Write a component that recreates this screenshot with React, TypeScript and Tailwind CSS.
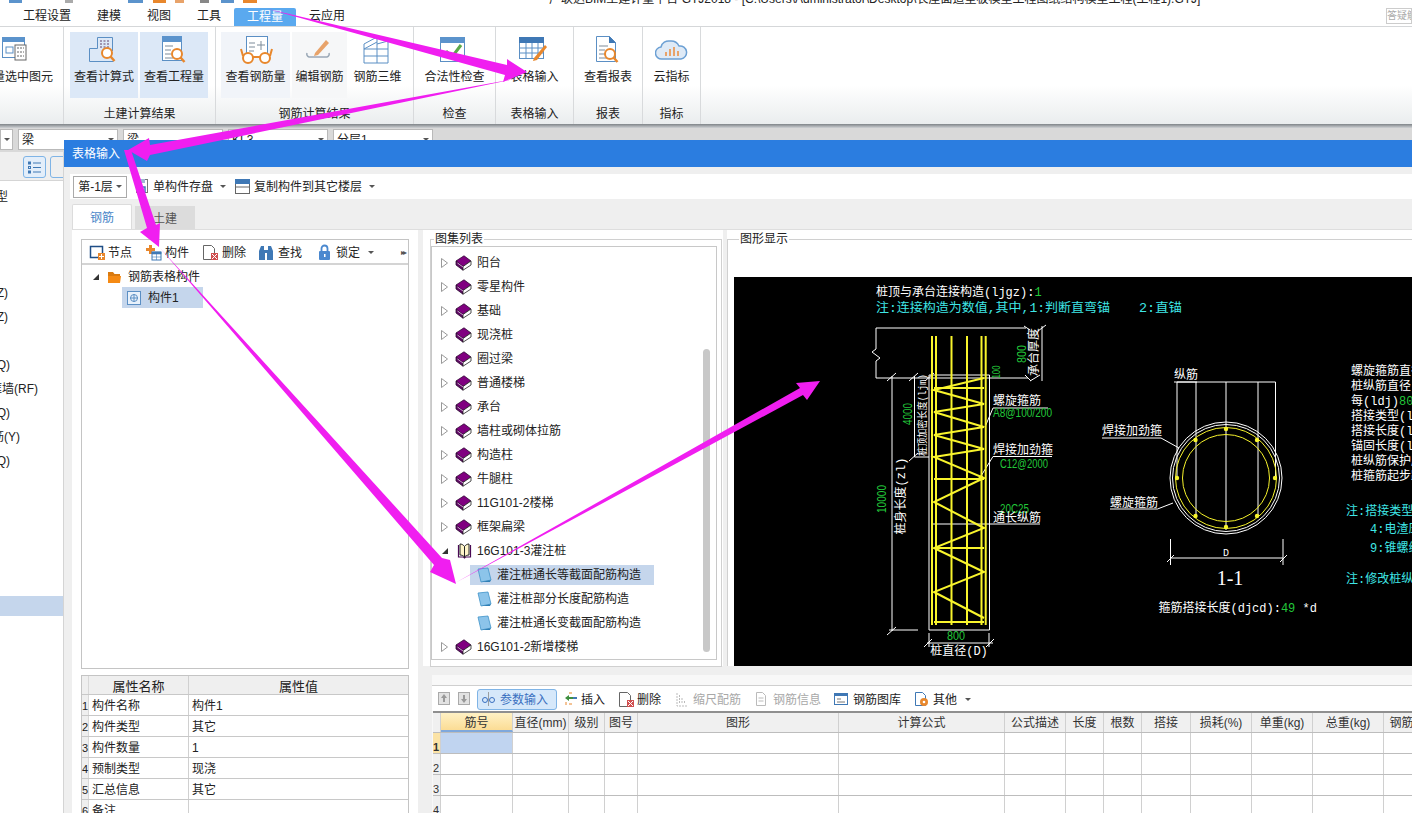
import React from "react";

const FONT = "font-['Liberation_Sans','Noto_Sans_CJK_SC',sans-serif]";

const Mag = ({ x, y, r = 5 }: { x: number; y: number; r?: number }) => (
  <g fill="none" stroke="#e8872c" strokeWidth="2">
    <circle cx={x} cy={y} r={r} fill="#fff" />
    <path d={`M${x + r * 0.7} ${y + r * 0.7}l${r * 0.8} ${r * 0.9}`} strokeWidth="2.5" />
  </g>
);

const Doc = () => (
  <>
    <rect x="5.5" y="1.5" width="19" height="24" fill="#fff" stroke="#5b8fc4" />
    <rect x="5" y="1" width="20" height="6" fill="#5b93cc" />
    <path d="M8 11h8M8 15h6M8 19h6M8 23h8" stroke="#7d8b99" />
  </>
);

const RibbonIcon = ({ kind }: { kind: string }) => {
  const b = "#5b8fc4";
  let c: React.ReactNode = null;
  if (kind === "select")
    c = (
      <>
        <rect x="2.5" y="2.5" width="22" height="20" fill="#fff" stroke={b} />
        <rect x="2" y="2" width="23" height="5" fill="#5b93cc" />
        <rect x="6" y="12" width="7" height="6" fill="none" stroke={b} />
        <rect x="15" y="10" width="11" height="15" fill="#fff" stroke="#666" />
        <path d="M17 13h7M17 17h7M17 21h7" stroke="#666" strokeDasharray="2 1" />
      </>
    );
  if (kind === "formula")
    c = (
      <>
        <path d="M2.5 26.5h24M2.5 26.5V13.5H10.5V2.5H25.5V16" fill="none" stroke={b} />
        <path d="M13 6h10M13 9h10M13 12h10" stroke="#8a7a9a" strokeDasharray="2 1.5" strokeWidth="1.5" />
        <Mag x={20} y={18} />
      </>
    );
  if (kind === "quantity")
    c = (
      <>
        <Doc />
        <Mag x={20} y={19} />
      </>
    );
  if (kind === "glasses")
    c = (
      <>
        <rect x="7.5" y="1.5" width="21" height="20" fill="#fff" stroke={b} />
        <path d="M10 8h6M10 12h6M10 16h5M22 6v9M18 10h8" stroke="#7d8b99" />
        <g fill="#fff" stroke="#e8872c" strokeWidth="2">
          <circle cx="9" cy="23" r="5" />
          <circle cx="26" cy="23" r="5" />
          <path d="M14 22h7M4 21L2 14M31 21l2-7" fill="none" />
        </g>
      </>
    );
  if (kind === "edit")
    c = (
      <>
        <path d="M4 18a3 3 0 0 0 2 4h18a3 3 0 0 0 2-4" fill="none" stroke="#9aa8b6" strokeWidth="1.5" />
        <path d="M12 18L23 5l3 3L15 20l-4 1z" fill="#e8a36a" />
      </>
    );
  if (kind === "rebar3d")
    c = (
      <>
        <g fill="none" stroke={b}>
          <path d="M3 9L16 2l11 4v22M3 9v19M16 2v26M3 14h24M3 21h24M3 28h24M3 14L16 7M27 6L16 9" />
        </g>
      </>
    );
  if (kind === "check")
    c = (
      <>
        <rect x="2.5" y="2.5" width="24" height="24" fill="#fff" stroke={b} />
        <rect x="2" y="2" width="25" height="6" fill="#5b93cc" />
        <path d="M8 16l6 6 9-12" fill="none" stroke="#5ba84a" strokeWidth="3" />
      </>
    );
  if (kind === "table")
    c = (
      <>
        <rect x="1.5" y="2.5" width="24" height="21" fill="#fff" stroke={b} />
        <rect x="1" y="2" width="25" height="6" fill="#3f78b5" />
        <path d="M2 13h23M2 18h23M8 8v15M14 8v15M20 8v15" stroke={b} />
        <path d="M16 23l11-13 2 2-10 13-4 1z" fill="#e8872c" />
      </>
    );
  if (kind === "report")
    c = (
      <>
        <path d="M5.5 1.5h13l6 6v19h-19z" fill="#fff" stroke={b} />
        <path d="M18 1v7h7z" fill="#3f78b5" />
        <path d="M8 11h9M8 15h6M8 19h6M8 23h9" stroke="#7d8b99" />
        <Mag x={19} y={19} />
      </>
    );
  if (kind === "cloud")
    c = (
      <>
        <path d="M7 24a6 6 0 0 1-1-12 8 8 0 0 1 9-6 9 9 0 0 1 9 5 6.500 6.500 0 0 1 2 13z" fill="#dfeaf6" stroke="#6ca0d4" strokeWidth="1.5" />
        <path d="M11 21v-4M15 21v-7M19 21v-9M23 21v-5" stroke="#e8a36a" strokeWidth="2" />
      </>
    );
  return (
    <svg width="34" height="30" viewBox="0 0 34 30" className="block">
      {c}
    </svg>
  );
};

const RBtn = ({ icon, text, cls = "" }: { icon: string; text: string; cls?: string }) => (
  <div className={`flex flex-col items-center h-[66px] pt-[3px] shrink-0 ${cls}`}>
    <div className="h-[30px]">
      <RibbonIcon kind={icon} />
    </div>
    <span className="mt-[3px] text-[12px] leading-[18px] whitespace-nowrap">{text}</span>
  </div>
);

const Group = ({ w, label, children, pad }: { w: string; label: string; children: React.ReactNode; pad: string }) => (
  <div className={`flex flex-col h-full border-r border-[#d8dadc] shrink-0 overflow-hidden ${w}`}>
    <div className={`flex h-[66px] mt-[5px] ${pad}`}>{children}</div>
    <div className="text-center text-[12px] leading-[16px] mt-[8px]">{label}</div>
  </div>
);

const Caret = () => <span className="inline-block w-0 h-0 border-x-[3px] border-x-transparent border-t-[3px] border-t-[#555]" />;

const Book = () => (
  <svg width="17" height="16" viewBox="0 0 17 16" className="block shrink-0">
    <path d="M1 6L9 .8l7 5.200-8 5.500z" fill="#800080" stroke="#2e0a33" strokeWidth=".8" />
    <path d="M1 6v4l7 5.200v-3.700z" fill="#5e0a63" stroke="#2e0a33" strokeWidth=".8" />
    <path d="M8 11.500v3.700l8-5.200V6z" fill="#fff" stroke="#222" strokeWidth=".8" />
    <path d="M2.500 8L8 12" stroke="#f0c8f2" strokeWidth=".8" />
  </svg>
);

const OpenBook = () => (
  <svg width="17" height="16" viewBox="0 0 17 16" className="block shrink-0">
    <path d="M2.500 2v12h5l1 1 1-1h5V2" fill="none" stroke="#4a0a55" strokeWidth="1.200" />
    <path d="M8.500 3.500C7 1.500 5.500 1 4 1v11c1.500 0 3 .5 4.500 2 1.500-1.500 3-2 4.500-2V1c-1.500 0-3 .5-4.500 2.500z" fill="#fff6c9" stroke="#222" />
    <path d="M8.500 3.500V14" stroke="#222" />
  </svg>
);

const Page = () => (
  <svg width="15" height="16" viewBox="0 0 15 16" className="block shrink-0">
    <path d="M1 2l10-1 3 12-10 2z" fill="#8cc4ea" stroke="#3f93c9" strokeWidth=".8" />
    <path d="M4 15l10-2-1 2H5z" fill="#2f7fb5" />
  </svg>
);

const Expander = ({ open }: { open?: boolean }) =>
  open ? (
    <span className="ml-[1px] mr-[7px] w-0 h-0 border-l-[6px] border-l-transparent border-b-[6px] border-b-[#333]" />
  ) : (
    <svg width="7" height="10" viewBox="0 0 7 10" className="block shrink-0">
      <path d="M.5.500l6 4.500-6 4.500z" fill="#fff" stroke="#999" />
    </svg>
  );

const TB = ({ kind }: { kind: string }) => {
  const b = "#3f78b5";
  const o = "#e8872c";
  const map: Record<string, React.ReactNode> = {
    node: (
      <>
        <rect x="1.500" y="2.500" width="12" height="11" fill="#fff" stroke="#1f4e86" strokeWidth="1.5" />
        <rect x="9" y="9" width="7" height="7" fill={o} />
        <path d="M12.500 10v5M10 12.500h5" stroke="#fff" />
      </>
    ),
    comp: (
      <>
        <path d="M4 1h3v3h3v3H7v3H4V7H1V4h3z" fill={o} />
        <rect x="7" y="8" width="9" height="8" fill="#fff" stroke={b} />
        <path d="M7 8h9v2H7zM7 13h9M11.500 10v6" fill={b} stroke={b} strokeWidth=".6" />
      </>
    ),
    del: (
      <>
        <path d="M1.500 1.500h8l3 3v11h-11z" fill="#fff" stroke="#666" />
        <rect x="9" y="9" width="7" height="7" fill="#d04f4f" />
        <path d="M10 10l5 5M15 10l-5 5" stroke="#fff" />
      </>
    ),
    find: (
      <>
        <path d="M1 7l2-5h3v4h4V2h3l2 5v9h-6V9H7v7H1z" fill={b} />
      </>
    ),
    lock: (
      <>
        <rect x="2" y="7" width="11" height="9" rx="1" fill="#4a88cf" />
        <path d="M4.500 7V4.500a3 3 0 0 1 6 0V7" fill="none" stroke="#4a88cf" strokeWidth="1.8" />
        <rect x="7" y="10" width="1.500" height="3" fill="#fff" />
      </>
    ),
    save: (
      <>
        <rect x="2.500" y="1.500" width="11" height="13" fill="#fff" stroke="#777" />
        <rect x="5" y="9" width="6" height="5" fill="#fff" stroke={b} strokeWidth="1.500" />
        <rect x="5" y="1" width="6" height="4" fill="#9fb9d5" />
      </>
    ),
    copy: (
      <>
        <rect x="1.500" y="1.500" width="14" height="14" fill="#fff" stroke="#666" />
        <rect x="1" y="1" width="15" height="5" fill="#3f78b5" />
        <path d="M1 9h15" stroke="#666" />
      </>
    ),
    up: (
      <>
        <rect x="1.500" y="1.500" width="11" height="12" fill="#e2e2e2" stroke="#aaa" />
        <path d="M7 3l3 4H8v4H6V7H4z" fill="#999" />
      </>
    ),
    down: (
      <>
        <rect x="1.500" y="1.500" width="11" height="12" fill="#e2e2e2" stroke="#aaa" />
        <path d="M7 12l3-4H8V4H6v4H4z" fill="#999" />
      </>
    ),
    param: (
      <>
        <path d="M7.500 1v14" stroke="#8a8a8a" strokeWidth=".8" />
        <circle cx="4" cy="9" r="2.500" fill="none" stroke="#3a70c0" />
        <circle cx="11" cy="9" r="2.500" fill="none" stroke="#3a70c0" />
      </>
    ),
    insert: (
      <>
        <path d="M2 7l4-3v2h4v2H6v2z" fill="#3f8f3f" />
        <path d="M6 2h3M6 13h3M3 11v3" stroke={o} />
        <rect x="10" y="6" width="4" height="2" fill={b} />
      </>
    ),
    scale: (
      <>
        <path d="M2 2v13h10M4.500 4v9M7 7v6M9.500 10v3" stroke="#bbb" fill="none" strokeDasharray="2 1" />
      </>
    ),
    info: (
      <>
        <path d="M2.500 1.500h6l3 3v10h-9z" fill="#fff" stroke="#bbb" />
        <path d="M4.500 7h5M4.500 10h5" stroke="#bbb" />
      </>
    ),
    lib: (
      <>
        <rect x="1.500" y="2.500" width="13" height="11" fill="#fff" stroke={b} />
        <rect x="1" y="2" width="14" height="3" fill="#3f78b5" />
        <path d="M4 8h4M4 11h8" stroke="#777" />
      </>
    ),
    other: (
      <>
        <path d="M1.500 1.500h7l3 3v10h-10z" fill="#fff" stroke={b} />
        <circle cx="10" cy="11" r="4" fill={o} />
        <circle cx="10" cy="11" r="1.300" fill="#fff" />
      </>
    ),
  };
  return (
    <svg width="17" height="17" viewBox="0 0 17 17" className="block shrink-0">
      {map[kind]}
    </svg>
  );
};

const ToolItem = ({ icon, text, cls = "", textCls = "" }: { icon: string; text: string; cls?: string; textCls?: string }) => (
  <div className={`flex items-center shrink-0 ${cls}`}>
    <TB kind={icon} />
    <span className={`text-[12px] whitespace-nowrap ${textCls}`}>{text}</span>
  </div>
);

const sideRows = [
  { t: "类型", c: "w-[8px]" },
  { t: "", c: "w-[8px]" },
  { t: "", c: "w-[8px]" },
  { t: "", c: "w-[8px]" },
  { t: "构造柱(Z)", c: "w-[8px]" },
  { t: "构造柱(Z)", c: "w-[8px]" },
  { t: "", c: "w-[8px]" },
  { t: "剪力墙(Q)", c: "w-[10px]" },
  { t: "人防门框墙(RF)", c: "w-[38px]" },
  { t: "砌体墙(Q)", c: "w-[10px]" },
  { t: "砌体加筋(Y)", c: "w-[20px]" },
  { t: "保温墙(Q)", c: "w-[10px]" },
  { t: "", c: "w-[8px]" },
  { t: "", c: "w-[8px]" },
  { t: "", c: "w-[8px]" },
  { t: "", c: "w-[8px]" },
  { t: "", c: "w-[8px]" },
];

const atlas = ["阳台", "零星构件", "基础", "现浇桩", "圈过梁", "普通楼梯", "承台", "墙柱或砌体拉筋", "构造柱", "牛腿柱", "11G101-2楼梯", "框架扁梁"];
const children = ["灌注桩通长等截面配筋构造", "灌注桩部分长度配筋构造", "灌注桩通长变截面配筋构造"];

const props = [
  ["1", "构件名称", "构件1"],
  ["2", "构件类型", "其它"],
  ["3", "构件数量", "1"],
  ["4", "预制类型", "现浇"],
  ["5", "汇总信息", "其它"],
  ["6", "备注", ""],
];

const cols = [
  { t: "筋号", c: "w-[72px] bg-gradient-to-b from-[#fff1c4] to-[#fbdc94] border-b-2 border-b-[#7fa8dc]" },
  { t: "直径(mm)", c: "w-[56px]" },
  { t: "级别", c: "w-[36px]" },
  { t: "图号", c: "w-[33px]" },
  { t: "图形", c: "w-[201px]" },
  { t: "计算公式", c: "w-[166px]" },
  { t: "公式描述", c: "w-[61px]" },
  { t: "长度", c: "w-[38px]" },
  { t: "根数", c: "w-[38px]" },
  { t: "搭接", c: "w-[49px]" },
  { t: "损耗(%)", c: "w-[61px]" },
  { t: "单重(kg)", c: "w-[61px]" },
  { t: "总重(kg)", c: "w-[71px]" },
  { t: "钢筋归类", c: "w-[60px]" },
];

const bodyCols = ["w-[72px]", "w-[56px]", "w-[36px]", "w-[33px]", "w-[201px]", "w-[166px]", "w-[61px]", "w-[38px]", "w-[38px]", "w-[49px]", "w-[61px]", "w-[61px]", "w-[71px]", "w-[60px]"];

const Y = "#f8f42c";
const W = "#ffffff";
const G = "#22c83a";
const C = "#3fe6e6";
const CJK = "'Liberation Mono','Noto Sans CJK SC',monospace";
const SANS = "'Liberation Sans',sans-serif";

const T = ({ x, y, f = W, s = 12, a, r, children: ch, len, sans }: { x: number; y: number; f?: string; s?: number; a?: "middle"; r?: boolean; children: React.ReactNode; len?: number; sans?: boolean }) => (
  <text
    x={x}
    y={y + 1}
    fill={f}
    fontSize={s}
    fontFamily={sans ? SANS : CJK}
    textAnchor={a}
    dominantBaseline="middle"
    textLength={len}
    lengthAdjust={len ? "spacingAndGlyphs" : undefined}
    transform={r ? `rotate(-90 ${x} ${y + 1})` : undefined}
  >
    {ch}
  </text>
);

const zig: [number, number][] = [
  [984, 378], [934, 390], [984, 404], [934, 412], [984, 427], [934, 435], [984, 449], [934, 457], [984, 478], [934, 502], [984, 528], [934, 548], [984, 572], [934, 592], [984, 618],
];

const Drawing = () => (
  <svg viewBox="734 277 678 389" className="block w-[678px] h-[389px]">
    <rect x="734" y="277" width="678" height="389" fill="#000" />
    <T x={876} y={292}>桩顶与承台连接构造(ljgz):<tspan fill={G}>1</tspan></T>
    <T x={876} y={308} f={C} len={234}>注:连接构造为数值,其中,1:判断直弯锚</T>
    <T x={1139} y={308} f={C} len={43}>2:直锚</T>

    <g stroke={W} fill="none" strokeWidth="1">
      <path d="M876 328H1026M876 328v21l-4 3 8 6-4 3v17M876 378H1028M1042 326v55" />
      <path d="M1024 326l6 4M1025 375l6 6M1038 331l8-6M1030 381l10-6" />
      <path d="M929 375V630H989.500V375H929" />
      <path d="M892 376V631M889 630H918M887 635l9-8M887 381l9-8M914.500 376V457M914.500 457H929M909 461l9-8M909 381l9-8M925 381l9-8" />
      <path d="M993 408H1048M993 408L985 427M993 456.500H1052M993 456.500L981 476M932 524H1040" />
      <path d="M927 643H993M929 633v14M989 633v14M924 647l8-8M986 647l8-8" />
      <path d="M1177 382H1275.500M1177 382V478M1196 382V516M1226 382V530M1258 382V516M1275.500 382V478" />
      <path d="M1174 382H1197M1102 438H1161L1179 448M1110 509H1157.500L1173 503" />
      <path d="M1170.500 558H1283M1170.500 539V565M1283 539V565M1167 562l7-7M1280 562l7-7" />
      <circle cx="1226" cy="478" r="56" />
      <circle cx="1226" cy="478" r="53.500" />
    </g>
    <g stroke={Y} fill="none">
      <circle cx="1226" cy="478" r="50.500" />
      <circle cx="1226" cy="478" r="43.500" />
    </g>
    <g fill={Y}>
      {[[1226, 429], [1226, 527], [1177, 478], [1275, 478], [1195.500, 440], [1257, 440], [1195.500, 516], [1257, 516]].map(([x, y]) => (
        <circle key={`${x}-${y}`} cx={x} cy={y} r="2.200" />
      ))}
    </g>

    <g stroke={Y} fill="none" strokeWidth="2">
      <path d="M932 336V625M936 336V625M951.500 336V625M967 336V625M981.500 336V625M985.700 336V625" />
      <path d={"M" + zig.map((p) => p.join(" ")).join("L")} />
      <path d="M934 479H984M934 548H984M934 622H984M934 388H984" />
    </g>
    <g fill={Y}>
      <circle cx="981" cy="478" r="2.500" />
    </g>

    <T x={883} y={498} f={G} a="middle" r sans len={28}>10000</T>
    <T x={902} y={495} a="middle" r>桩身长度(zl)</T>
    <T x={909} y={413} f={G} a="middle" r sans len={22}>4000</T>
    <T x={923} y={414} s={10} a="middle" r len={82}>桩顶加密长度(ljm)</T>
    <T x={997} y={371} f={G} s={11} a="middle" r sans len={13}>100</T>
    <T x={1023} y={353} f={G} a="middle" r sans len={18}>800</T>
    <T x={1035} y={351} s={12} a="middle" r>承台厚度</T>

    <T x={993} y={401}>螺旋箍筋</T>
    <T x={993} y={413} f={G} sans len={59}>A8@100/200</T>
    <T x={993} y={450}>焊接加劲箍</T>
    <T x={1000} y={464} f={G} sans len={48}>C12@2000</T>
    <T x={1000} y={509} f={G} sans len={29}>20C25</T>
    <T x={993} y={518}>通长纵筋</T>
    <T x={956} y={636} f={G} a="middle" sans len={18}>800</T>
    <T x={959} y={651} a="middle">桩直径(D)</T>

    <T x={1174} y={375}>纵筋</T>
    <T x={1102} y={431}>焊接加劲箍</T>
    <T x={1110} y={503}>螺旋箍筋</T>
    <T x={1226} y={552} s={10} a="middle">D</T>
    <text x="1230" y="580" fill={W} fontSize="20" fontFamily="'Liberation Serif',serif" textAnchor="middle" dominantBaseline="middle">1-1</text>
    <T x={1158.500} y={608}>箍筋搭接长度(djcd):<tspan fill={G}>49</tspan> *d</T>

    <T x={1351} y={371}>螺旋箍筋直径</T>
    <T x={1351} y={386}>桩纵筋直径</T>
    <T x={1351} y={401}>每(ldj)<tspan fill={G}>800</tspan></T>
    <T x={1351} y={416}>搭接类型(l</T>
    <T x={1351} y={431}>搭接长度(l</T>
    <T x={1351} y={446}>锚固长度(l</T>
    <T x={1351} y={461}>桩纵筋保护层</T>
    <T x={1351} y={476}>桩箍筋起步距</T>
    <T x={1346} y={511} f={C}>注:搭接类型</T>
    <T x={1370} y={529} f={C}>4:电渣压力</T>
    <T x={1370} y={548} f={C}>9:锥螺纹</T>
    <T x={1346} y={579} f={C}>注:修改桩纵筋</T>
  </svg>
);

const Arrows = () => (
  <svg viewBox="0 0 1412 813" className="absolute inset-0 w-[1412px] h-[813px] pointer-events-none">
    <g fill="#f01ef0">
      <polygon points="268,9 507,65 507,59 527,72 503,82 505,75" />
      <polygon points="519,78 150,145 149,138 128,150 147,161 150,155" />
      <polygon points="124,150 131,150 156,225 160,223 159,247 140,232 147,228" />
      <polygon points="160,248 442,558 450,560 456,584 430,572 434,565" />
      <polygon points="455,583 800,388 796,383 820,381 807,400 803,395" />
    </g>
  </svg>
);

export default function App() {
  return (
    <div className={`relative w-[1412px] h-[813px] overflow-hidden bg-white text-[#222] ${FONT}`}>
      <div className="flex flex-col h-full">
        {/* title strip */}
        <div className="relative h-[6px] overflow-hidden flex shrink-0">
          <div className="w-[549px] shrink-0 flex -mt-[5px]">
            {[
              { c: "ml-[9px] w-[13px] bg-[#5b93cc]" },
              { c: "ml-[43px] w-[8px] bg-[#aaa]" },
              { c: "ml-[55px] w-[15px] bg-[#5b93cc]" },
              { c: "ml-[10px] w-[13px] bg-[#e8872c]" },
              { c: "ml-[9px] w-[9px] bg-[#e8a36a]" },
              { c: "ml-[16px] w-[9px] bg-[#888]" },
              { c: "ml-[12px] w-[13px] bg-[#5b93cc]" },
              { c: "ml-[9px] w-[14px] bg-[#e8872c]" },
            ].map((d, i) => (
              <span key={i} className={`h-[8px] shrink-0 ${d.c}`} />
            ))}
          </div>
          <div className="-mt-[9px] text-[12px] leading-[16px] whitespace-nowrap">广联达BIM土建计量平台 GTJ2018 - [C:\Users\Administrator\Desktop\长屋面造型板模型工程图纸结构模型工程(工程1).GTJ]</div>
        </div>
        {/* menu */}
        <div className="flex items-end h-[21px] border-b border-[#d5d7d9] shrink-0 text-[12px] relative">
          <span className="ml-[23px] mb-[1px]">工程设置</span>
          <span className="ml-[26px] mb-[1px]">建模</span>
          <span className="ml-[26px] mb-[1px]">视图</span>
          <span className="ml-[26px] mb-[1px]">工具</span>
          <span className="ml-[13px] w-[62px] h-[18px] bg-[#5aa9ef] text-white text-center rounded-t-[2px] leading-[18px]">工程量</span>
          <span className="ml-[13px] mb-[1px]">云应用</span>
          <span className="ml-auto mb-[2px] w-[26px] h-[16px] border border-[#ccc] text-[#aaa] text-[10px] leading-[14px] overflow-hidden whitespace-nowrap">答疑解惑</span>
        </div>
        {/* ribbon */}
        <div className="flex h-[97px] shrink-0 bg-gradient-to-b from-white from-60% to-[#eaedee]">
          <Group w="w-[64px]" label="" pad="justify-end pr-[10px]">
            <RBtn icon="select" text="批量选中图元" />
          </Group>
          <Group w="w-[152px]" label="土建计算结果" pad="pl-[6px] gap-[2px]">
            <RBtn icon="formula" text="查看计算式" cls="w-[68px] bg-[#dce8f7]" />
            <RBtn icon="quantity" text="查看工程量" cls="w-[68px] bg-[#dce8f7]" />
          </Group>
          <Group w="w-[198px]" label="钢筋计算结果" pad="pl-[5px]">
            <RBtn icon="glasses" text="查看钢筋量" cls="w-[69px] bg-[#f1f4f9]" />
            <RBtn icon="edit" text="编辑钢筋" cls="w-[55px] ml-[2px] bg-[#f6f7f8]" />
            <RBtn icon="rebar3d" text="钢筋三维" cls="w-[53px] ml-[4px]" />
          </Group>
          <Group w="w-[82px]" label="检查" pad="justify-center">
            <RBtn icon="check" text="合法性检查" cls="w-[60px]" />
          </Group>
          <Group w="w-[78px]" label="表格输入" pad="justify-center">
            <RBtn icon="table" text="表格输入" cls="w-[49px]" />
          </Group>
          <Group w="w-[69px]" label="报表" pad="justify-center">
            <RBtn icon="report" text="查看报表" cls="w-[48px]" />
          </Group>
          <Group w="w-[58px]" label="指标" pad="justify-center">
            <RBtn icon="cloud" text="云指标" cls="w-[36px]" />
          </Group>
        </div>
        <div className="h-[4px] shrink-0 bg-gradient-to-b from-[#7f8488] to-[#cfd2d5]" />
        {/* selector row */}
        <div className="flex h-[24px] pt-[1px] gap-[5px] bg-[#d9d9d9] shrink-0 pl-[0px] text-[12px]">
          {[
            { t: "", c: "w-[13px]" },
            { t: "梁", c: "w-[100px]" },
            { t: "梁", c: "w-[100px]" },
            { t: "KL3", c: "w-[100px]" },
            { t: "分层1", c: "w-[100px]" },
          ].map((d, i) => (
            <div key={i} className={`h-[21px] bg-white border border-[#b9b9b9] flex items-center justify-between px-[3px] shrink-0 ${d.c}`}>
              <span>{d.t}</span>
              <Caret />
            </div>
          ))}
        </div>
        {/* left sidebar */}
        <div className="flex flex-col w-[64px] flex-1 border-r border-[#d4d4d4] overflow-hidden">
          <div className="h-[29px] bg-[#efefef] border-b border-[#d5d5d5] flex pt-[4px] pl-[23px] gap-[4px] shrink-0">
            <div className="w-[23px] h-[22px] shrink-0 rounded-[3px] border border-[#7fb4e6] bg-[#e3eefa] flex items-center justify-center">
              <svg width="13" height="13" viewBox="0 0 13 13">
                <path d="M5 2h8M5 6.500h8M5 11h8" stroke="#3f78b5" />
                <rect x=".5" y="1" width="2" height="2" fill="none" stroke="#3f78b5" />
                <rect x=".5" y="5.500" width="2" height="2" fill="none" stroke="#3f78b5" />
                <rect x=".5" y="10" width="2" height="2" fill="none" stroke="#3f78b5" />
              </svg>
            </div>
            <div className="w-[23px] h-[22px] shrink-0 rounded-[3px] border border-[#7fb4e6]" />
          </div>
          <div className="pt-[4px] text-[12px]">
            {sideRows.map((r, i) => (
              <div key={i} className="h-[24px] flex items-center">
                <div className={`flex justify-end whitespace-nowrap ${r.c}`}>{r.t}</div>
              </div>
            ))}
            <div className="h-[20px] mt-[3px] bg-[#c5d6ec]" />
          </div>
        </div>
      </div>

      {/* dialog window */}
      <div className="absolute left-[64px] top-[140px] right-0 bottom-0 flex flex-col bg-[#efefef] text-[12px]">
        <div className="h-[27px] bg-[#2b7de0] text-white flex items-center pl-[8px] shrink-0">表格输入</div>
        <div className="h-[25px] mt-[7px] ml-[6px] bg-white flex items-center shrink-0">
          <div className="ml-[3px] w-[54px] h-[22px] border border-[#aaa] flex items-center justify-center gap-[3px]">
            <span>第-1层</span>
            <Caret />
          </div>
          <ToolItem icon="save" text="单构件存盘" cls="ml-[7px] gap-[2px]" />
          <span className="ml-[7px] flex"><Caret /></span>
          <ToolItem icon="copy" text="复制构件到其它楼层" cls="ml-[8px] gap-[3px]" />
          <span className="ml-[7px] flex"><Caret /></span>
        </div>
        <div className="flex items-end h-[30px] pl-[8px] gap-[3px] shrink-0">
          <div className="w-[60px] h-[25px] pt-[2px] bg-white rounded-t-[2px] border border-b-0 border-[#dcdcdc] flex items-center justify-center text-[#4a86c8]">钢筋</div>
          <div className="w-[60px] h-[23px] pt-[2px] bg-[#dcdcdc] flex items-center justify-center text-[#555]">土建</div>
        </div>
        <div className="flex flex-1 ml-[8px] min-h-0 bg-white border-t border-[#dedede]">
          {/* left column */}
          <div className="w-[346px] shrink-0 pl-[9px] pr-[9px] pt-[9px] flex flex-col">
            <div className="h-[430px] border border-[#c4c4c4] shrink-0">
              <div className="h-[25px] pt-[2px] bg-white border-b-2 border-[#d4d4d4] flex items-center relative">
                <ToolItem icon="node" text="节点" cls="ml-[7px] gap-[2px]" />
                <ToolItem icon="comp" text="构件" cls="ml-[13px] gap-[3px]" />
                <ToolItem icon="del" text="删除" cls="ml-[13px] gap-[3px]" />
                <ToolItem icon="find" text="查找" cls="ml-[12px] gap-[3px]" />
                <ToolItem icon="lock" text="锁定" cls="ml-[15px] gap-[2px]" />
                <span className="ml-[8px] flex"><Caret /></span>
                <span className="ml-auto mr-[3px] text-[8px] tracking-[-2px] text-[#555]">▸▸</span>
              </div>
              <div className="h-[20px] flex items-center pl-[10px] mt-[2px]">
                <Expander open />
                <svg width="15" height="13" viewBox="0 0 15 13" className="ml-[1px] block">
                  <path d="M1 1h5l1.500 2H13v2H1z" fill="#d97a10" />
                  <path d="M1 5h13l-1 7H1z" fill="#f58a14" />
                </svg>
                <span className="ml-[6px]">钢筋表格构件</span>
              </div>
              <div className="ml-[40px] w-[81px] h-[21px] bg-[#c5d6ec] flex items-center pl-[5px]">
                <svg width="14" height="14" viewBox="0 0 14 14" className="block">
                  <rect x=".5" y=".5" width="13" height="13" fill="#e8f1fb" stroke="#5b8fc4" />
                  <circle cx="7" cy="7" r="3.500" fill="none" stroke="#5b8fc4" />
                  <path d="M7 3v8M3 7h8" stroke="#5b8fc4" />
                </svg>
                <span className="ml-[7px]">构件1</span>
              </div>
            </div>
            {/* property table */}
            <div className="mt-[6px] border-x border-t border-[#c4c4c4] flex-1 overflow-hidden">
              <div className="flex h-[19px] bg-[#efefef] border-b border-[#c8c8c8] text-[13px]">
                <div className="w-[7px] border-r border-[#d8d8d8]" />
                <div className="w-[100px] border-r border-[#d0d0d0] text-center leading-[21px]">属性名称</div>
                <div className="flex-1 text-center leading-[21px]">属性值</div>
              </div>
              {props.map((p) => (
                <div key={p[0]} className="flex h-[21px] border-b border-[#c8c8c8] items-center overflow-hidden">
                  <div className="w-[7px] h-full bg-[#efefef] border-r border-[#d8d8d8] text-center leading-[22px] text-[11px]">{p[0]}</div>
                  <div className="w-[100px] h-full border-r border-[#d0d0d0] pl-[3px] leading-[22px]">{p[1]}</div>
                  <div className="flex-1 h-full pl-[3px] leading-[22px]">{p[2]}</div>
                </div>
              ))}
            </div>
          </div>
          <div className="w-[5px] shrink-0 bg-[#efefef]" />
          {/* right column */}
          <div className="flex-1 min-w-0 flex flex-col bg-[#efefef]">
            <div className="h-[436px] bg-white flex shrink-0">
              {/* atlas list */}
              <div className="relative w-[292px] h-[428px] ml-[7px] mt-[9px] border border-[#d0d0d0] shrink-0">
                <span className="absolute left-[3px] -top-[8px] bg-white px-[1px] leading-[14px]">图集列表</span>
                <div className="relative mt-[6px] mr-[4px] h-[414px] border border-[#c8c8c8] pt-[4px]">
                  {atlas.map((t) => (
                    <div key={t} className="h-[24px] flex items-center pl-[9px]">
                      <Expander />
                      <span className="ml-[7px]"><Book /></span>
                      <span className="ml-[5px]">{t}</span>
                    </div>
                  ))}
                  <div className="h-[24px] flex items-center pl-[9px]">
                    <Expander open />
                    <span className="ml-[1px]"><OpenBook /></span>
                    <span className="ml-[4px]">16G101-3灌注桩</span>
                  </div>
                  {children.map((t, i) => (
                    <div key={t} className="h-[24px] flex items-center ml-[38px]">
                      <div className={`h-[20px] flex items-center pl-[7px] w-[184px] ${i === 0 ? "bg-[#c5d6ec]" : ""}`}>
                        <Page />
                        <span className="ml-[5px] whitespace-nowrap">{t}</span>
                      </div>
                    </div>
                  ))}
                  <div className="h-[24px] flex items-center pl-[9px]">
                    <Expander />
                    <span className="ml-[7px]"><Book /></span>
                    <span className="ml-[5px]">16G101-2新增楼梯</span>
                  </div>
                  <div className="absolute right-[6px] top-[102px] w-[7px] h-[303px] rounded-[4px] bg-[#c8c8c8]" />
                </div>
              </div>
              <div className="w-[4px] ml-[1px] shrink-0 bg-[#efefef]" />
              {/* drawing */}
              <div className="relative flex-1 min-w-0 mt-[9px] border-t border-l border-[#d0d0d0] pl-[6px] pt-[37px]">
                <span className="absolute left-[11px] -top-[8px] bg-white px-[1px] leading-[14px]">图形显示</span>
                <Drawing />
              </div>
            </div>
            {/* bottom grid */}
            <div className="flex-1 min-h-0 ml-[9px] mt-[9px] bg-[#f8f8f8] pt-[10px] overflow-hidden">
              <div className="h-[26px] pt-[2px] bg-white border-t border-[#cfcfcf] flex items-center">
                <span className="ml-[5px]"><TB kind="up" /></span>
                <span className="ml-[3px]"><TB kind="down" /></span>
                <div className="ml-[3px] w-[80px] h-[21px] bg-[#d6e8fa] border border-[#7fb4e6] rounded-[3px] flex items-center pl-[3px] gap-[2px] text-[#3a70c0] shrink-0">
                  <TB kind="param" />
                  <span>参数输入</span>
                </div>
                <ToolItem icon="insert" text="插入" cls="ml-[6px] gap-[1px]" />
                <ToolItem icon="del" text="删除" cls="ml-[13px] gap-[2px]" />
                <ToolItem icon="scale" text="缩尺配筋" cls="ml-[14px] gap-[1px]" textCls="text-[#a8a8a8]" />
                <ToolItem icon="info" text="钢筋信息" cls="ml-[13px] gap-[2px]" textCls="text-[#a8a8a8]" />
                <ToolItem icon="lib" text="钢筋图库" cls="ml-[12px] gap-[3px]" />
                <ToolItem icon="other" text="其他" cls="ml-[13px] gap-[2px]" />
                <span className="ml-[8px] flex"><Caret /></span>
              </div>
              <div className="ml-[1px] bg-white border-t-2 border-[#8f8f8f]">
                <div className="flex h-[20px] bg-[#f0f0f0] border-b border-[#bdbdbd]">
                  <div className="w-[8px] shrink-0 border-r border-[#d0d0d0]" />
                  {cols.map((c) => (
                    <div key={c.t} className={`shrink-0 border-r border-[#d0d0d0] text-center leading-[21px] whitespace-nowrap overflow-hidden text-[#333] ${c.c}`}>{c.t}</div>
                  ))}
                </div>
                {[1, 2, 3, 4].map((n) => (
                  <div key={n} className="flex h-[21px] border-b border-[#bdbdbd]">
                    <div className={`w-[8px] shrink-0 border-r border-[#d0d0d0] text-[11px] leading-[28px] text-[#333] ${n === 1 ? "bg-[#fbe3a6] font-bold" : "bg-[#f0f0f0]"}`}>{n}</div>
                    {bodyCols.map((c, j) => (
                      <div key={c + j} className={`shrink-0 border-r border-[#d0d0d0] ${c} ${n === 1 && j === 0 ? "bg-[#c0d4f0]" : ""}`} />
                    ))}
                  </div>
                ))}
              </div>
            </div>
          </div>
        </div>
      </div>

      <Arrows />
    </div>
  );
}
